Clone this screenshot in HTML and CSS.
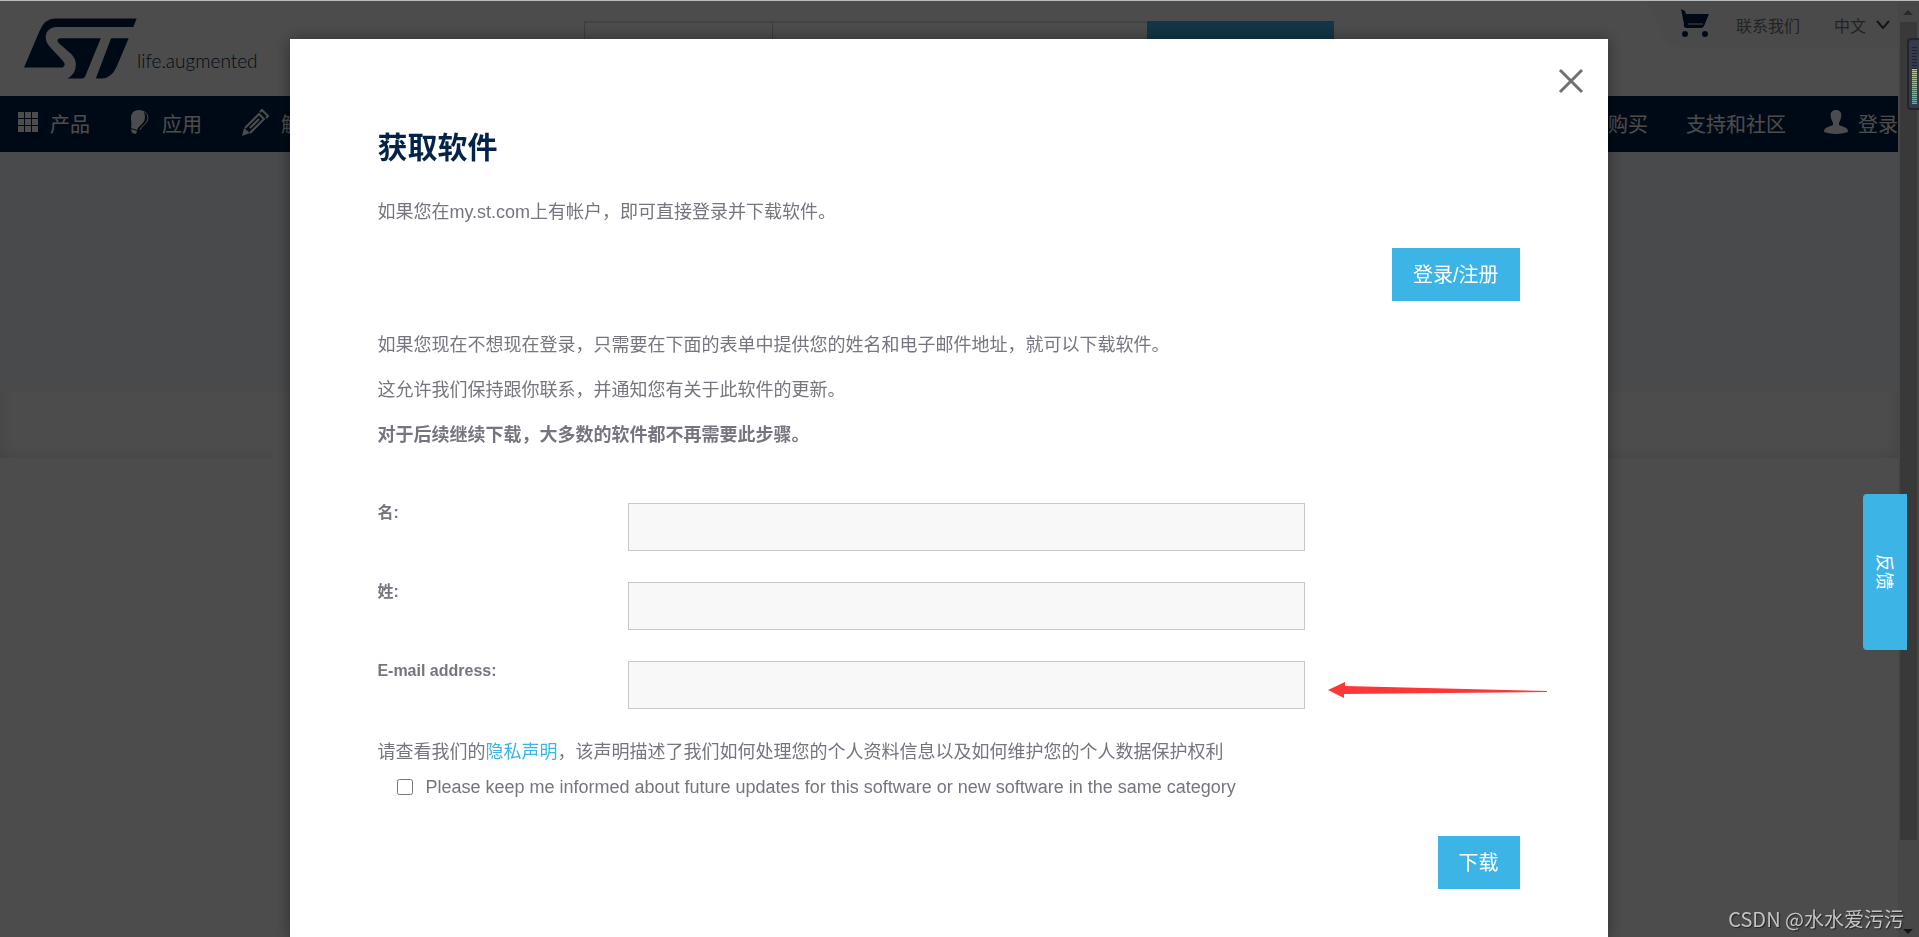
FILE: index.html
```html
<!DOCTYPE html>
<html lang="zh-CN">
<head>
<meta charset="utf-8">
<title>获取软件</title>
<link rel="stylesheet" href="styles.css">
</head>
<body>
<div class="window">
  <div class="page">
    <header class="header">
      <a class="logo" href="#">
        <svg class="logo-mark" viewBox="72 54 340 183" aria-hidden="true">
          <path d="M72 203 L119 92 Q134 55 166 55 H411 L401 81 H168 C140 83 132 108 141 128 Q146 137 156 147 L190 184 Q200 196 188 203 Z"/>
          <path d="M180 115 H303 L256 230 Q253 236 246 236 H203 Q228 222 228 194 Q228 176 214 162 L177 130 Q167 118 180 115 Z"/>
          <path d="M334 115 H387 L351 200 Q335 236 306 236 H288 Z"/>
        </svg>
        <span class="logo-text">life.augmented</span>
      </a>
      <form class="search">
        <div class="search-scope"></div>
        <div class="search-field"></div>
        <div class="search-go"></div>
      </form>
      <div class="tools">
        <svg class="tools-shape" viewBox="0 0 254 47" preserveAspectRatio="none" aria-hidden="true"><path d="M0 0 Q8 4 11 16 L17 33 Q22 47 40 47 H254 V0 Z"/></svg>
        <a class="cart" href="#" aria-label="购物车">
          <svg width="28" height="28" viewBox="0 0 28 28" aria-hidden="true"><path d="M0 0 L4 2 L5 5 H28 L23 17 Q22 19 20 19 H5 Q2 18 3 15 Z"/><path class="slot" d="M7 15 H22"/><circle cx="4" cy="25" r="3"/><circle cx="24" cy="25" r="3"/></svg>
        </a>
        <a class="contact" href="#">联系我们</a>
        <button class="language" type="button">中文
          <svg width="14" height="9" viewBox="0 0 14 9" aria-hidden="true"><path d="M1 1 L7 8 L13 1"/></svg>
        </button>
      </div>
    </header>
    <nav class="nav">
      <div class="nav-group">
        <a class="nav-item" href="#">
          <svg width="20" height="20" viewBox="0 0 20 20" aria-hidden="true"><path d="M0 0h6v6H0zM7 0h6v6H7zM14 0h6v6h-6zM0 7h6v6H0zM7 7h6v6H7zM14 7h6v6h-6zM0 14h6v6H0zM7 14h6v6H7zM14 14h6v6h-6z"/></svg>
          产品</a>
        <a class="nav-item" href="#">
          <svg width="20" height="24" viewBox="0 0 20 24" aria-hidden="true"><path d="M9 0 C3 0 1 4 1 8 C1 13 2 14 1 18 L7 20 C9 15 15 14 15 7 C15 3 13 0 9 0 Z M1 19 L7 21 L6 24 L2 23 Z"/><path class="line" d="M12 1 C20 3 19 11 14 15 Q11 17 10 20"/></svg>
          应用</a>
        <a class="nav-item" href="#">
          <svg width="27" height="27" viewBox="0 0 27 27" aria-hidden="true"><path d="M0 27 L2 19 L8 24 Z"/><path class="stroke" d="M3 19 L17 5 L22 10 L8 24 M8 19 L17 10 M18 3 L20 1 L26 7 L24 9"/></svg>
          解决方案</a>
      </div>
      <div class="nav-group nav-group-end">
        <a class="nav-item" href="#">和购买</a>
        <a class="nav-item" href="#">支持和社区</a>
        <a class="nav-item" href="#">
          <svg width="24" height="24" viewBox="0 0 24 24" aria-hidden="true"><path d="M12 0 C7 0 6 4 7 8 Q8 11 9 13 V15 C5 17 0 17 0 22 Q12 26 24 22 C24 17 19 17 15 15 V13 Q16 11 17 8 C18 4 17 0 12 0 Z"/></svg>
          登录</a>
      </div>
    </nav>
    <div class="hero"></div>
    <div class="strip"><div class="strip-box"></div><div class="strip-box strip-box-end"></div></div>
  </div>
  <div class="scrollbar" aria-hidden="true">
    <svg width="10" height="5" viewBox="0 0 10 5"><path class="arrow-up" d="M0 5 L5 0 L10 5 Z"/></svg>
    <div class="scroll-track"><div class="scroll-thumb"></div></div>
    <svg width="10" height="5" viewBox="0 0 10 5"><path class="arrow-down" d="M0 0 L5 5 L10 0 Z"/></svg>
  </div>
</div>

<div class="overlay">
  <section class="modal" role="dialog" aria-labelledby="title">
    <button class="close" type="button" aria-label="关闭">
      <svg width="26" height="26" viewBox="0 0 26 26" aria-hidden="true"><path d="M2 2 L24 24 M24 2 L2 24"/></svg>
    </button>
    <h1 class="title" id="title">获取软件</h1>
    <p class="text">如果您在my.st.com上有帐户，即可直接登录并下载软件。</p>
    <div class="actions login-actions"><button class="button" type="button">登录/注册</button></div>
    <p class="text">如果您现在不想现在登录，只需要在下面的表单中提供您的姓名和电子邮件地址，就可以下载软件。</p>
    <p class="text">这允许我们保持跟你联系，并通知您有关于此软件的更新。</p>
    <p class="text"><strong>对于后续继续下载，大多数的软件都不再需要此步骤。</strong></p>
    <form class="form">
      <div class="field"><label for="first">名:</label><input id="first" type="text"></div>
      <div class="field"><label for="last">姓:</label><input id="last" type="text"></div>
      <div class="field"><label for="email">E-mail address:</label><input id="email" type="email">
        <svg class="pointer" width="220" height="16" viewBox="0 0 220 16" aria-hidden="true"><path d="M0 8 L17 0 V4 L219 9 V10 L16 12 V16 Z"/></svg>
      </div>
      <p class="privacy">请查看我们的<a href="#">隐私声明</a>，该声明描述了我们如何处理您的个人资料信息以及如何维护您的个人数据保护权利</p>
      <div class="consent"><input id="updates" type="checkbox"><label for="updates">Please keep me informed about future updates for this software or new software in the same category</label></div>
      <div class="actions"><button class="button" type="button">下载</button></div>
    </form>
  </section>
</div>

<button class="feedback" type="button">反馈</button>
<div class="meter" aria-hidden="true"><div class="meter-idle"></div><div class="meter-level"></div></div>
<div class="watermark">CSDN @水水爱污污</div>
</body>
</html>
```
FILE: styles.css
```css
* { box-sizing: border-box; }

body {
  margin: 0;
  height: 100vh;
  overflow: hidden;
  border-top: 1px solid #b8bcba;
  background: #fff;
  color: #75757f;
  font-family: "Liberation Sans", "Noto Sans CJK SC", sans-serif;
  font-size: 18px;
}

button { border: 0; padding: 0; font: inherit; cursor: pointer; }
a { color: inherit; text-decoration: none; }

.window { display: grid; grid-template-columns: minmax(0, 1fr) 21px; height: 100%; }

/* Page behind the dialog */
.header {
  position: relative;
  display: flex;
  align-items: flex-start;
  height: 95px;
}
.logo { display: flex; padding: 17px 0 0 24px; color: #03234b; }
.logo-mark { width: 113px; height: 61px; fill: #03234b; }
.logo-text { padding-top: 31px; font-family: Lato, sans-serif; font-size: 19px; font-weight: 300; line-height: 24px; }
.search {
  position: absolute;
  top: 20px;
  left: 50%;
  display: grid;
  grid-template-columns: 1fr 2fr 1fr;
  width: 750px;
  height: 50px;
  margin-left: -365px;
}
.search-scope, .search-field { border: 1px solid #c8c8c8; border-right: 0; border-top-width: 2px; border-top-color: #e0e0e0; }
.search-go { background: #3cb4e6; }
.tools {
  position: relative;
  display: flex;
  align-items: center;
  gap: 27px;
  height: 47px;
  margin-left: auto;
  padding: 0 8px 0 37px;
  font-size: 16px;
}
.tools-shape { position: absolute; inset: 0; width: 100%; height: 100%; fill: #f9f9f9; }
.cart, .contact, .language { position: relative; }
.cart { height: 34px; padding-top: 1px; fill: #03234b; }
.cart .slot { fill: none; stroke: #f4f4f4; stroke-width: 1; }
.language { display: flex; align-items: center; gap: 10px; margin-left: 7px; background: none; color: inherit; }
.language svg { fill: none; stroke: #444; stroke-width: 2; }

.nav {
  display: flex;
  justify-content: space-between;
  height: 56px;
  overflow: hidden;
  background: #03234b;
  color: #fff;
  font-size: 20px;
}
.nav-group { display: flex; gap: 40px; padding-left: 18px; }
.nav-group-end { gap: 38px; }
.nav-group-end .nav-item { gap: 10px; }
.nav-item { display: flex; align-items: center; gap: 12px; padding-bottom: 2px; white-space: nowrap; }
.nav svg { fill: #fff; margin-bottom: 2px; }
.nav .line { fill: none; stroke: #fff; stroke-width: 1; }
.nav .stroke { fill: none; stroke: #fff; stroke-width: 2; }
.hero { height: 239px; background: #f4f8ff; }
.strip { display: flex; justify-content: space-between; height: 67px; }
.strip-box { width: 272px; box-shadow: inset 8px -8px 16px -8px #dcdcdc; }
.strip-box-end { flex: 0 0 320px; box-shadow: inset -8px -8px 16px -8px #dcdcdc; }

.scrollbar {
  position: relative;
  z-index: 2;
  display: flex;
  flex-direction: column;
  align-items: center;
  gap: 7px;
  padding: 9px 2px 3px 1px;
  background: #474747;
}
.scroll-track { display: grid; grid-template-rows: 10fr 1fr; flex: 1; width: 17px; }
.scroll-thumb { background: #393939; }
.arrow-up { fill: #292929; }
.arrow-down { fill: #151515; }

/* Dialog */
.overlay {
  position: fixed;
  inset: 1px 21px 0 0;
  padding-top: 38px;
  overflow: hidden;
  background: rgba(0, 0, 0, .7);
}
.modal {
  position: relative;
  width: 69.4%;
  min-height: 100%;
  margin: 0 auto;
  padding: 85px 88px 50px 87px;
  background: #fff;
  box-shadow: 0 0 16px rgba(0, 0, 0, .4);
}
.close { position: absolute; top: 29px; right: 24px; height: 26px; background: none; }
.close svg { display: block; fill: none; stroke: #707070; stroke-width: 3; }
.title { margin: 0 0 26px; color: #03234b; font-size: 30px; line-height: 48px; }
.text { margin: 0 0 17px; line-height: 28px; }
.actions { display: flex; justify-content: flex-end; }
.login-actions { margin: 22px 0 30px; }
.button {
  height: 53px;
  padding: 0 21px 2px;
  background: #3cb4e6;
  color: #fff;
  font-size: 20px;
}
.form { margin-top: 54px; }
.field {
  position: relative;
  display: grid;
  grid-template-columns: 251px minmax(0, 677px);
  align-items: start;
  margin-bottom: 31px;
}
.field label { font-size: 16px; font-weight: bold; line-height: 20px; }
.field input {
  width: 100%;
  height: 48px;
  padding: 0 12px;
  border: 1px solid #c8c8c8;
  background: #f8f8f8;
  font: inherit;
}
.pointer { position: absolute; top: 21px; left: 951px; fill: #fc3737; }
.privacy { margin: -2px 0 7px; line-height: 28px; }
.privacy a { color: #3cb4e6; }
.consent { display: flex; align-items: center; gap: 12px; margin: 0 0 35px 20px; line-height: 28px; }
.consent input { width: 16px; height: 16px; margin: 0; }

/* Floating pieces */
.feedback {
  position: fixed;
  z-index: 3;
  top: 494px;
  right: 12px;
  width: 44px;
  height: 156px;
  padding-left: 2px;
  border-radius: 4px 0 0 4px;
  background: #3cb4e6;
  color: #fff;
  writing-mode: vertical-rl;
  text-orientation: sideways;
}
.meter {
  position: fixed;
  z-index: 3;
  top: 38px;
  right: 0;
  width: 12px;
  height: 72px;
  padding: 7px 2px 6px 3px;
  border: 2px solid #22252f;
  border-right: 0;
  border-radius: 4px 0 0 4px;
  background: #363b4c;
}
.meter-idle { height: 22px; background: repeating-linear-gradient(#20242f 0 1px, #363b4c 1px 3px); }
.meter-level {
  height: 35px;
  background: repeating-linear-gradient(transparent 0 1px, rgba(40, 50, 60, .6) 1px 2px), linear-gradient(#d6c64a, #8cc85a 50%, #32c8aa);
}
.watermark {
  position: fixed;
  z-index: 3;
  right: 15px;
  bottom: 3px;
  color: #c4c4c4;
  font-family: "Noto Sans CJK SC", sans-serif;
  font-size: 20px;
  line-height: 30px;
  text-shadow: 1px 1px 1px #222;
}
```
